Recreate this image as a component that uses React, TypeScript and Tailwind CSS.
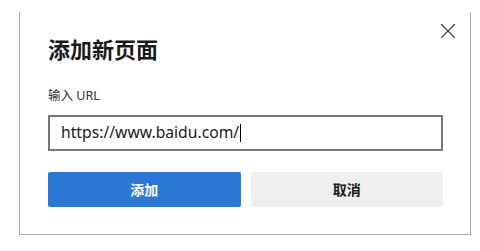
import { X } from 'lucide-react';

export default function App() {
  return (
    <div className="w-[480px] h-[251px] bg-white relative" style={{ fontFamily: '"Noto Sans", "Noto Sans CJK SC", sans-serif' }}>
      <div className="absolute left-[19px] top-[12px] w-[452px] h-[223px] border-l border-r border-b border-[#a8a8a8] bg-white">
        <button className="absolute right-[9px] top-[6px] text-[#444]">
          <X size={26} strokeWidth={1.1} />
        </button>
        <div className="pl-[28px] pr-[27px] pt-[23px] flex flex-col">
          <h1 className="text-[22px] leading-[28px] font-bold text-[#1a1a1a]">添加新页面</h1>
          <label className="mt-[24px] text-[12.5px] leading-[18px] text-[#333]">输入 URL</label>
          <div className="mt-[10px] h-[36px] border-2 border-[#767676] flex items-center pl-[11px]">
            <span className="text-[15.7px] text-[#1a1a1a] leading-none">https://www.baidu.com/</span>
            <span className="w-px h-[18px] bg-black ml-[1px]" />
          </div>
          <div className="mt-[21px] grid grid-cols-2 gap-[10px]">
            <button className="h-[35px] rounded-[2px] bg-[#2a78d3] text-white text-[14px] font-bold">添加</button>
            <button className="h-[35px] rounded-[2px] bg-[#efefef] text-[#1a1a1a] text-[14px] font-bold">取消</button>
          </div>
        </div>
      </div>
    </div>
  );
}
